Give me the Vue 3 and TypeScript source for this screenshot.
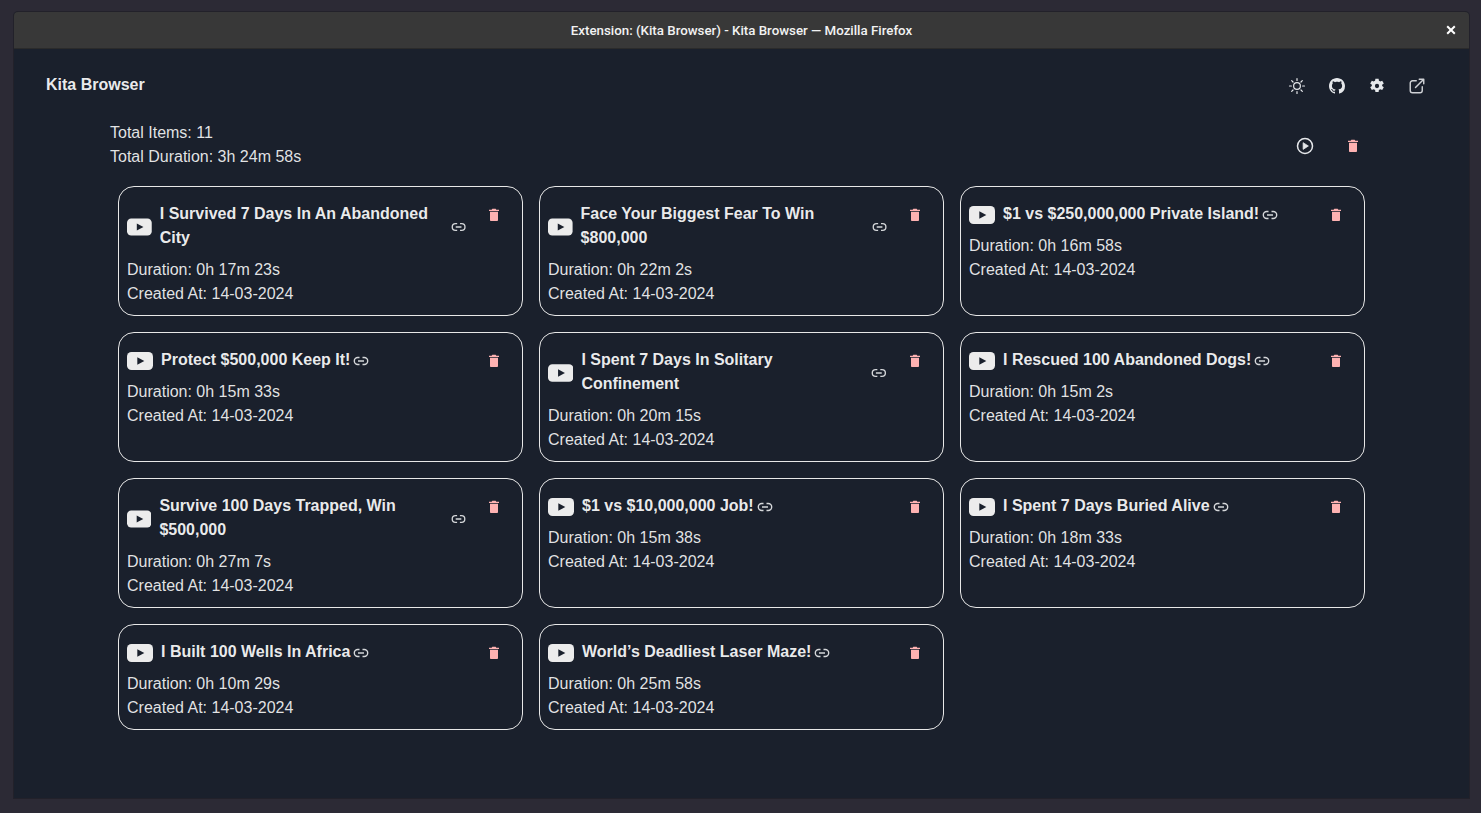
<script setup lang="ts">
interface Video {
  title: string
  duration: string
  created: string
}

const videos: Video[] = [
  { title: 'I Survived 7 Days In An Abandoned City', duration: '0h 17m 23s', created: '14-03-2024' },
  { title: 'Face Your Biggest Fear To Win $800,000', duration: '0h 22m 2s', created: '14-03-2024' },
  { title: '$1 vs $250,000,000 Private Island!', duration: '0h 16m 58s', created: '14-03-2024' },
  { title: 'Protect $500,000 Keep It!', duration: '0h 15m 33s', created: '14-03-2024' },
  { title: 'I Spent 7 Days In Solitary Confinement', duration: '0h 20m 15s', created: '14-03-2024' },
  { title: 'I Rescued 100 Abandoned Dogs!', duration: '0h 15m 2s', created: '14-03-2024' },
  { title: 'Survive 100 Days Trapped, Win $500,000', duration: '0h 27m 7s', created: '14-03-2024' },
  { title: '$1 vs $10,000,000 Job!', duration: '0h 15m 38s', created: '14-03-2024' },
  { title: 'I Spent 7 Days Buried Alive', duration: '0h 18m 33s', created: '14-03-2024' },
  { title: 'I Built 100 Wells In Africa', duration: '0h 10m 29s', created: '14-03-2024' },
  { title: 'World’s Deadliest Laser Maze!', duration: '0h 25m 58s', created: '14-03-2024' },
]

const trashPath = 'M6 19.5c0 .8.7 1.5 1.5 1.5h9c.8 0 1.5-.7 1.5-1.5V7H6v12.5zM19.5 4h-4l-1-1.2h-5L8.500 4h-4v2h15V4z'
</script>

<template>
  <div class="desktop">
    <div class="window">
      <div class="titlebar">
        <span class="window-title">Extension: (Kita Browser) - Kita Browser — Mozilla Firefox</span>
        <svg class="close" viewBox="0 0 10 10" width="10" height="10">
          <path d="M1.2 1.2l7.6 7.6M8.8 1.2L1.2 8.8" stroke="#fff" stroke-width="2" fill="none" />
        </svg>
      </div>

      <div class="content">
        <header class="app-header">
          <span class="app-name">Kita Browser</span>
          <div class="header-actions">
            <button class="icon-btn">
              <svg viewBox="0 0 24 24" width="18" height="18" fill="none" stroke="currentColor" stroke-width="1.6" stroke-linecap="round">
                <circle cx="12" cy="12" r="4.5" />
                <path d="M12 2v2.5M12 19.5V22M2 12h2.5M19.5 12H22M4.900 4.900l1.800 1.800M17.300 17.300l1.800 1.800M4.900 19.100l1.800-1.800M17.300 6.700l1.800-1.800" />
              </svg>
            </button>
            <button class="icon-btn">
              <svg viewBox="0 0 16 16" width="16" height="16" fill="currentColor">
                <path d="M8 0C3.58 0 0 3.58 0 8c0 3.54 2.29 6.53 5.47 7.59.4.07.55-.17.55-.38 0-.19-.01-.82-.01-1.49-2.01.37-2.53-.49-2.69-.94-.09-.23-.48-.94-.82-1.13-.28-.15-.68-.52-.01-.53.63-.01 1.08.58 1.23.82.72 1.21 1.87.87 2.33.66.07-.52.28-.87.51-1.07-1.78-.2-3.64-.89-3.64-3.95 0-.87.31-1.59.82-2.15-.08-.2-.36-1.02.08-2.12 0 0 .67-.21 2.2.82.64-.18 1.32-.27 2-.27s1.36.09 2 .27c1.53-1.04 2.2-.82 2.2-.82.44 1.1.16 1.92.08 2.12.51.56.82 1.27.82 2.15 0 3.07-1.87 3.75-3.65 3.95.29.25.54.73.54 1.48 0 1.07-.01 1.93-.01 2.2 0 .21.15.46.55.38A8.01 8.01 0 0 0 16 8c0-4.42-3.58-8-8-8z" />
              </svg>
            </button>
            <button class="icon-btn">
              <svg viewBox="0 0 24 24" width="16" height="16" fill="currentColor" fill-rule="evenodd">
                <path d="M14.4 1h-4.800l-.5 3.200c-.7.3-1.300.6-1.900 1.100l-3-1.200-2.400 4 2.500 2c-.1.700-.1 1.100 0 1.800l-2.500 2 2.400 4 3-1.200c.6.500 1.200.8 1.900 1.100l.5 3.200h4.800l.5-3.200c.7-.3 1.300-.6 1.900-1.100l3 1.200 2.400-4-2.500-2c.1-.7.1-1.100 0-1.800l2.500-2-2.400-4-3 1.200c-.6-.5-1.200-.8-1.900-1.100zM12 8.800a3.200 3.200 0 1 1 0 6.400 3.200 3.200 0 0 1 0-6.400z" />
              </svg>
            </button>
            <button class="icon-btn muted">
              <svg viewBox="0 0 24 24" width="18" height="18" fill="none" stroke="currentColor" stroke-width="1.900" stroke-linecap="round" stroke-linejoin="round">
                <path d="M11 5H6a3 3 0 0 0-3 3v10a3 3 0 0 0 3 3h10a3 3 0 0 0 3-3v-5" />
                <path d="M10 14L21 3M15 3h6v6" />
              </svg>
            </button>
          </div>
        </header>

        <section class="library">
          <div class="summary">
            <div>
              <div>Total Items: 11</div>
              <div>Total Duration: 3h 24m 58s</div>
            </div>
            <div class="summary-actions">
              <button class="icon-btn">
                <svg viewBox="0 0 24 24" width="18" height="18" fill="none" stroke="currentColor" stroke-width="2">
                  <circle cx="12" cy="12" r="10" />
                  <path d="M9.500 7.500l7 4.500-7 4.500z" fill="currentColor" stroke-width="1" stroke-linejoin="round" />
                </svg>
              </button>
              <button class="icon-btn trash">
                <svg viewBox="0 0 24 24" width="16" height="16" fill="currentColor"><path :d="trashPath" /></svg>
              </button>
            </div>
          </div>

          <div class="grid">
            <article v-for="video in videos" :key="video.title" class="card">
              <div class="card-head">
                <div class="title-row">
                  <svg class="yt" viewBox="0 0 26 18">
                    <rect width="26" height="18" rx="4.500" fill="#ececec" />
                    <path d="M10.300 5.200l7 3.800-7 3.800z" fill="#1a202c" />
                  </svg>
                  <span class="title">{{ video.title }}</span>
                  <svg class="link" viewBox="0 0 16 16" fill="none" stroke="currentColor" stroke-width="1.400">
                    <path d="M6.500 4.500H4.800a3.500 3.500 0 0 0 0 7h1.700M9.500 4.500h1.700a3.500 3.500 0 0 1 0 7H9.500M5 8h6" />
                  </svg>
                </div>
                <button class="icon-btn trash">
                  <svg viewBox="0 0 24 24" width="16" height="16" fill="currentColor"><path :d="trashPath" /></svg>
                </button>
              </div>
              <div>Duration: {{ video.duration }}</div>
              <div>Created At: {{ video.created }}</div>
            </article>
          </div>
        </section>
      </div>
    </div>
  </div>
</template>

<style>
html,
body {
  margin: 0;
  background: #2c2a35;
}
</style>

<style scoped>
.desktop {
  box-sizing: border-box;
  height: 813px;
  padding: 12px 12px 15px 14px;
  background: #2c2a35;
  overflow: hidden;
}

.window {
  height: 100%;
  display: flex;
  flex-direction: column;
  border-radius: 4px 4px 0 0;
  background: #1a202c;
  box-shadow: 0 0 0 1px #22212a;
}

.titlebar {
  position: relative;
  flex: none;
  box-sizing: border-box;
  height: 37px;
  display: flex;
  align-items: center;
  justify-content: center;
  border-radius: 4px 4px 0 0;
  background: #383838;
  border-bottom: 1px solid #2b2b2b;
}

.window-title {
  font-family: Roboto, sans-serif;
  font-weight: 500;
  font-size: 13.3px;
  color: #f2f2f2;
}

.close {
  position: absolute;
  right: 13px;
  top: 13px;
}

.content {
  flex: 1;
  color: rgba(255, 255, 255, 0.88);
  font-family: "Liberation Sans", Arial, sans-serif;
  font-size: 16px;
  line-height: 24px;
}

.app-header {
  display: flex;
  align-items: center;
  justify-content: space-between;
  padding: 17px 32px 0;
}

.app-name {
  margin-bottom: 2px;
  font-weight: 700;
  color: rgba(255, 255, 255, 0.92);
}

.header-actions,
.summary-actions {
  display: flex;
}

.summary-actions {
  gap: 8px;
  margin-top: 2px;
}

.icon-btn {
  width: 40px;
  height: 40px;
  flex: none;
  display: flex;
  align-items: center;
  justify-content: center;
  padding: 0;
  border: 0;
  background: none;
  color: #e6e8eb;
}

.icon-btn.muted {
  color: #d0d2d6;
}

.icon-btn.trash {
  color: #feb2b2;
}

.library {
  width: 1263px;
  margin: 15px auto 0;
}

.summary {
  display: flex;
  align-items: center;
  justify-content: space-between;
}

.grid {
  display: grid;
  grid-template-columns: repeat(3, 1fr);
  gap: 16px;
  padding: 17px 8px 0;
}

.card {
  padding: 8px 8px 9px;
  border: 1px solid #e8e8e8;
  border-radius: 16px;
}

.card-head {
  display: flex;
  align-items: flex-start;
  justify-content: space-between;
  gap: 8px;
}

.card-head .icon-btn {
  margin-bottom: -1px;
}

.title-row {
  flex: 1;
  min-width: 0;
  display: flex;
  align-items: center;
  gap: 8px;
  padding: 7px 0 8px;
}

.title {
  font-weight: 700;
  color: rgba(255, 255, 255, 0.92);
}

.yt {
  width: 26px;
  height: 18px;
  margin-top: 2px;
}

.link {
  width: 16px;
  height: 16px;
  margin-top: 2px;
  margin-left: -5px;
  color: #d5d7da;
}
</style>
